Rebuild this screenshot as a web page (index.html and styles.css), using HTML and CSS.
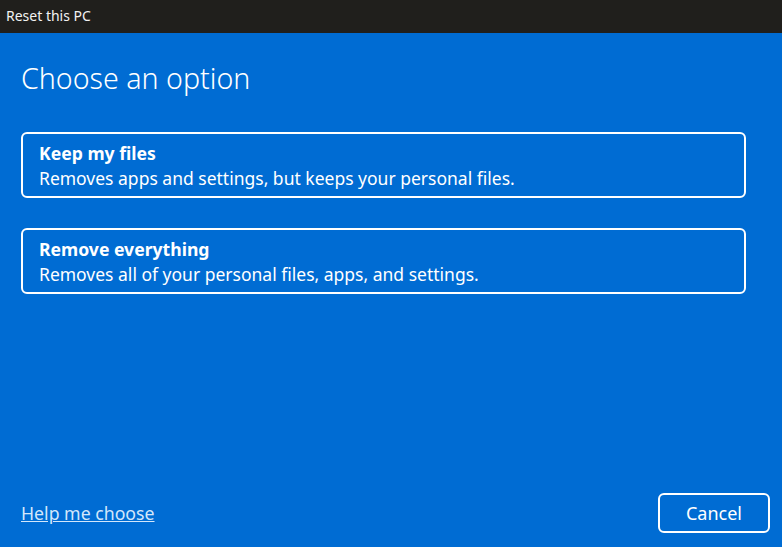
FILE: index.html
```html
<!DOCTYPE html>
<html lang="en">
<head>
    <meta charset="UTF-8">
    <title>Reset this PC</title>
    <link rel="stylesheet" href="styles.css">
</head>
<body>
    <div class="title-bar">Reset this PC</div>

    <main class="dialog">
        <h1 class="dialog-title">Choose an option</h1>

        <div class="options">
            <button class="option">
                <span class="option-name">Keep my files</span>
                <span class="option-desc">Removes apps and settings, but keeps your personal files.</span>
            </button>
            <button class="option">
                <span class="option-name">Remove everything</span>
                <span class="option-desc">Removes all of your personal files, apps, and settings.</span>
            </button>
        </div>

        <div class="dialog-footer">
            <a href="#" class="help-link">Help me choose</a>
            <button class="cancel-btn">Cancel</button>
        </div>
    </main>
</body>
</html>
```

FILE: styles.css
```css
html, body {
    height: 100%;
}

body {
    margin: 0;
    font-family: "Noto Sans", "Open Sans", sans-serif;
    background-color: #006cd3;
    color: white;
    display: flex;
    flex-direction: column;
    overflow: hidden;
}

.title-bar {
    height: 33px;
    background-color: #201f1c;
    color: #f2f2f2;
    font-size: 14px;
    line-height: 31px;
    padding-left: 6px;
    box-sizing: border-box;
}

.dialog {
    flex: 1;
    display: flex;
    flex-direction: column;
    padding: 0 12px 14px 21px;
}

.dialog-title {
    font-size: 28.6px;
    font-weight: 300;
    margin: 25px 0 0;
    line-height: 40px;
}

.options {
    display: flex;
    flex-direction: column;
    gap: 30px;
    margin-top: 34px;
    width: 725px;
}

.option {
    display: flex;
    flex-direction: column;
    align-items: flex-start;
    height: 66px;
    box-sizing: border-box;
    border: 2px solid white;
    border-radius: 6px;
    background: transparent;
    color: white;
    font-family: inherit;
    padding: 7px 16px 0;
    text-align: left;
    cursor: pointer;
}

.option-name {
    font-size: 17.6px;
    font-weight: bold;
    line-height: 24px;
}

.option-desc {
    font-size: 17.5px;
    line-height: 27px;
}

.dialog-footer {
    margin-top: auto;
    display: flex;
    justify-content: space-between;
    align-items: center;
}

.help-link {
    color: #d3e7fb;
    font-size: 17.7px;
}

.cancel-btn {
    width: 112px;
    height: 40px;
    border: 2px solid white;
    border-radius: 6px;
    background: transparent;
    color: white;
    font-family: inherit;
    font-size: 18px;
    cursor: pointer;
}
```
